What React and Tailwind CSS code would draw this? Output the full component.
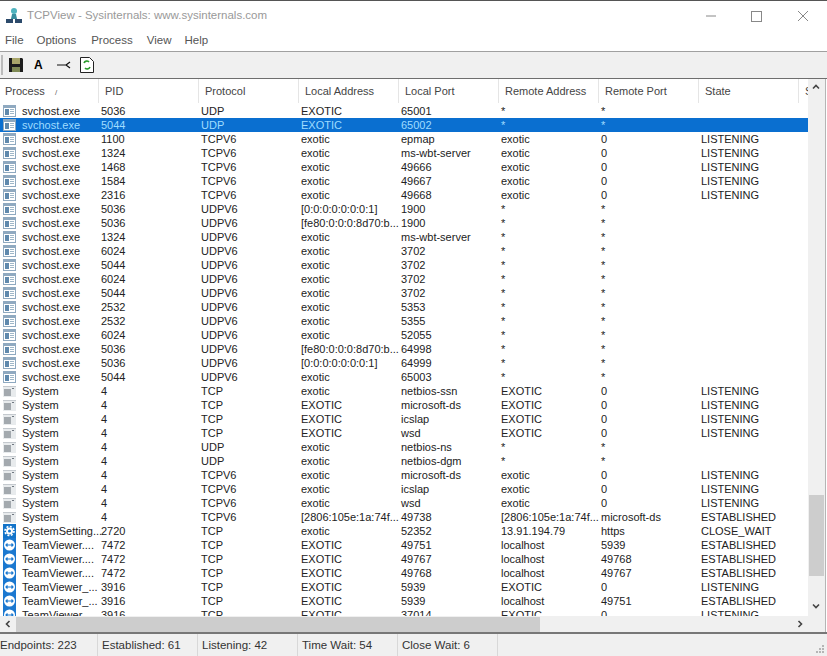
const SV = "svchost.exe", SY = "System";
const rows = [
[0,SV,"5036","UDP","EXOTIC","65001","*","*",""],
[0,SV,"5044","UDP","EXOTIC","65002","*","*",""],
[0,SV,"1100","TCPV6","exotic","epmap","exotic","0","LISTENING"],
[0,SV,"1324","TCPV6","exotic","ms-wbt-server","exotic","0","LISTENING"],
[0,SV,"1468","TCPV6","exotic","49666","exotic","0","LISTENING"],
[0,SV,"1584","TCPV6","exotic","49667","exotic","0","LISTENING"],
[0,SV,"2316","TCPV6","exotic","49668","exotic","0","LISTENING"],
[0,SV,"5036","UDPV6","[0:0:0:0:0:0:0:1]","1900","*","*",""],
[0,SV,"5036","UDPV6","[fe80:0:0:0:8d70:b...","1900","*","*",""],
[0,SV,"1324","UDPV6","exotic","ms-wbt-server","*","*",""],
[0,SV,"6024","UDPV6","exotic","3702","*","*",""],
[0,SV,"5044","UDPV6","exotic","3702","*","*",""],
[0,SV,"6024","UDPV6","exotic","3702","*","*",""],
[0,SV,"5044","UDPV6","exotic","3702","*","*",""],
[0,SV,"2532","UDPV6","exotic","5353","*","*",""],
[0,SV,"2532","UDPV6","exotic","5355","*","*",""],
[0,SV,"6024","UDPV6","exotic","52055","*","*",""],
[0,SV,"5036","UDPV6","[fe80:0:0:0:8d70:b...","64998","*","*",""],
[0,SV,"5036","UDPV6","[0:0:0:0:0:0:0:1]","64999","*","*",""],
[0,SV,"5044","UDPV6","exotic","65003","*","*",""],
[1,SY,"4","TCP","exotic","netbios-ssn","EXOTIC","0","LISTENING"],
[1,SY,"4","TCP","EXOTIC","microsoft-ds","EXOTIC","0","LISTENING"],
[1,SY,"4","TCP","EXOTIC","icslap","EXOTIC","0","LISTENING"],
[1,SY,"4","TCP","EXOTIC","wsd","EXOTIC","0","LISTENING"],
[1,SY,"4","UDP","exotic","netbios-ns","*","*",""],
[1,SY,"4","UDP","exotic","netbios-dgm","*","*",""],
[1,SY,"4","TCPV6","exotic","microsoft-ds","exotic","0","LISTENING"],
[1,SY,"4","TCPV6","exotic","icslap","exotic","0","LISTENING"],
[1,SY,"4","TCPV6","exotic","wsd","exotic","0","LISTENING"],
[1,SY,"4","TCPV6","[2806:105e:1a:74f...","49738","[2806:105e:1a:74f...","microsoft-ds","ESTABLISHED"],
[2,"SystemSetting...","2720","TCP","exotic","52352","13.91.194.79","https","CLOSE_WAIT"],
[3,"TeamViewer....","7472","TCP","EXOTIC","49751","localhost","5939","ESTABLISHED"],
[3,"TeamViewer....","7472","TCP","EXOTIC","49767","localhost","49768","ESTABLISHED"],
[3,"TeamViewer....","7472","TCP","EXOTIC","49768","localhost","49767","ESTABLISHED"],
[3,"TeamViewer_...","3916","TCP","EXOTIC","5939","EXOTIC","0","LISTENING"],
[3,"TeamViewer_...","3916","TCP","EXOTIC","5939","localhost","49751","ESTABLISHED"],
[3,"TeamViewer_...","3916","TCP","EXOTIC","37014","EXOTIC","0","LISTENING"],
];
const heads = ["PID","Protocol","Local Address","Local Port","Remote Address","Remote Port","State"];

function RowIcon({ kind }) {
  if (kind === 0) return (
    <svg width="16" height="14" viewBox="0 0 16 14" className="shrink-0">
      <rect x="3" y="1" width="14" height="12" fill="#8fa9c0" />
      <rect x="4" y="4" width="11" height="8" fill="#fff" />
      <rect x="5" y="5" width="4" height="6" fill="#5f89ad" />
      <rect x="10" y="5" width="4" height="1" fill="#9fb7c8" />
      <rect x="10" y="7" width="4" height="1" fill="#9fb7c8" />
      <rect x="10" y="9" width="4" height="1" fill="#9fb7c8" />
    </svg>
  );
  if (kind === 1) return (
    <svg width="16" height="14" viewBox="0 0 16 14" className="shrink-0">
      <rect x="3" y="2" width="13" height="11" fill="#e8ebed" />
      <rect x="4" y="5" width="7" height="7" fill="#a3a9ae" />
      <rect x="12" y="4" width="2" height="1" fill="#6f7780" />
      <rect x="3" y="2" width="13" height="1" fill="#c4c9ce" />
    </svg>
  );
  if (kind === 2) return (
    <svg width="16" height="14" viewBox="0 0 16 14" className="shrink-0">
      <rect x="3" y="0" width="13" height="14" fill="#1273c9" />
      <circle cx="9.500" cy="7" r="2.500" fill="none" stroke="#fff" strokeWidth="2" />
      <circle cx="9.500" cy="7" r="4.500" fill="none" stroke="#fff" strokeWidth="1.600" strokeDasharray="2 1.500" />
    </svg>
  );
  return (
    <svg width="16" height="14" viewBox="0 0 16 14" className="shrink-0">
      <rect x="3" y="0" width="13" height="14" fill="#1b78d0" />
      <circle cx="9.500" cy="7" r="5.500" fill="#fff" />
      <path d="M6 7h7M7.500 5.500 6 7l1.500 1.500M11.500 5.500 13 7l-1.500 1.500" fill="none" stroke="#1b78d0" strokeWidth="1.200" />
    </svg>
  );
}

export default function App() {
  return (
    <div className="w-[827px] h-[656px] flex flex-col overflow-hidden bg-white text-[11px] text-[#222] font-['Liberation_Sans',sans-serif]">
      <div className="h-[30px] shrink-0 flex items-center border-t border-[#555] bg-white">
        <svg width="18" height="18" viewBox="0 0 18 18" className="ml-[5px] shrink-0">
          <circle cx="9" cy="4" r="3" fill="#4fb3bf" />
          <path d="M7 7h4l1 5H6z" fill="#3a8fa0" />
          <rect x="1" y="12" width="7" height="4" fill="#2c4a6b" />
          <rect x="10" y="12" width="7" height="4" fill="#2c4a6b" />
        </svg>
        <span className="ml-[4px] pt-[1px] text-[11.500px] text-[#999]">TCPView - Sysinternals: www.sysinternals.com</span>
        <div className="ml-auto flex items-center">
          <svg width="12" height="12" viewBox="0 0 12 12" className="mr-[34px]"><path d="M1 6h10" stroke="#888" /></svg>
          <svg width="12" height="12" viewBox="0 0 12 12" className="mr-[34px]"><rect x=".5" y="1.500" width="10" height="10" fill="none" stroke="#888" /></svg>
          <svg width="12" height="12" viewBox="0 0 12 12" className="mr-[18px]"><path d="M1 1l10 10M11 1 1 11" stroke="#888" /></svg>
        </div>
      </div>
      <div className="h-[22px] shrink-0 flex items-center pl-[5px] text-[#555] text-[11.500px] border-b border-[#a0a0a0]">
        <span className="mr-[13px]">File</span><span className="mr-[15px]">Options</span><span className="mr-[14px]">Process</span><span className="mr-[13px]">View</span><span>Help</span>
      </div>
      <div className="h-[27px] shrink-0 flex items-center bg-[#f0f0f0] border-b border-[#6e6e6e]">
        <div className="w-[2px] h-[20px] ml-[1px] bg-[#bbb]" />
        <svg width="16" height="16" viewBox="0 0 16 16" className="ml-[5px]">
          <path d="M1 1h13l1 1v13H1z" fill="#1d1d1d" />
          <rect x="4" y="1" width="8" height="6" fill="#a9a66a" />
          <rect x="4" y="10" width="8" height="5" fill="#7f8a55" />
        </svg>
        <span className="ml-[10px] w-[11px] text-[12px] font-bold text-black leading-none">A</span>
        <svg width="14" height="12" viewBox="0 0 14 12" className="ml-[12px]"><path d="M0 6h9M9 6l4-3M9 6l4 3" fill="none" stroke="#111" strokeWidth="1.200" /></svg>
        <svg width="14" height="16" viewBox="0 0 14 16" className="ml-[9px]">
          <path d="M.5.5h9l4 4v11H.5z" fill="#fff" stroke="#222" />
          <path d="M4 6a3 3 0 0 1 5-1M10 10a3 3 0 0 1-5 1" fill="none" stroke="#2a9a2a" strokeWidth="1.600" />
        </svg>
      </div>
      <div className="flex-1 min-h-0 flex bg-white">
        <div className="w-[808px] shrink-0 flex flex-col min-h-0">
          <div className="flex-1 min-h-0 flex flex-col overflow-hidden">
            <div className="h-[25px] shrink-0 flex items-center text-[#444] pb-[1px]">
              <div className="w-[99px] shrink-0 h-[24px] flex items-center pl-[5px] border-r border-[#e5e5e5] relative">
                Process
                <span className="absolute left-[55px] top-[8px] text-[8px] text-[#666]">/</span>
              </div>
              {heads.map((h) => (
                <div key={h} className="w-[100px] shrink-0 h-[24px] flex items-center pl-[6px] border-r border-[#e5e5e5]">{h}</div>
              ))}
              <div className="pl-[6px]">S</div>
            </div>
            {rows.map((r, i) => (
              <div key={i} className={`h-[14px] shrink-0 flex items-center leading-[14px] whitespace-nowrap ${i === 1 ? "bg-[#0a6fd0] text-[#9fdcff]" : ""}`}>
                <div className="w-[98px] shrink-0 flex items-center">
                  <RowIcon kind={r[0]} />
                  <span className="ml-[6px]">{r[1]}</span>
                </div>
                <div className="w-[100px] shrink-0 pl-[3px]">{r[2]}</div>
                <div className="w-[100px] shrink-0 pl-[3px]">{r[3]}</div>
                <div className="w-[100px] shrink-0 pl-[3px]">{r[4]}</div>
                <div className="w-[100px] shrink-0 pl-[3px]">{r[5]}</div>
                <div className="w-[100px] shrink-0 pl-[3px]">{r[6]}</div>
                <div className="w-[100px] shrink-0 pl-[3px]">{r[7]}</div>
                <div className="w-[100px] shrink-0 pl-[3px]">{r[8]}</div>
              </div>
            ))}
          </div>
          <div className="h-[16px] shrink-0 flex items-center bg-[#f0f0f0]">
            <svg width="16" height="16" viewBox="0 0 16 16"><path d="M9.500 5 6.500 8l3 3" fill="none" stroke="#444" strokeWidth="1.600" /></svg>
            <div className="w-[524px] h-[15px] bg-[#cdcdcd]" />
            <svg width="16" height="16" viewBox="0 0 16 16" className="ml-auto"><path d="M6.500 5l3 3-3 3" fill="none" stroke="#444" strokeWidth="1.600" /></svg>
          </div>
        </div>
        <div className="w-[17px] shrink-0 flex flex-col bg-[#f0f0f0]">
          <svg width="16" height="16" viewBox="0 0 16 16" className="shrink-0"><path d="M5 9.500l3-3 3 3" fill="none" stroke="#444" strokeWidth="1.600" /></svg>
          <div className="flex-1 flex flex-col justify-end pb-[22px]">
            <div className="h-[81px] w-[15px] ml-[1px] bg-[#cdcdcd]" />
          </div>
          <svg width="16" height="16" viewBox="0 0 16 16" className="shrink-0"><path d="M5 6.500l3 3 3-3" fill="none" stroke="#444" strokeWidth="1.600" /></svg>
          <div className="h-[18px] shrink-0" />
        </div>
        <div className="w-[2px] shrink-0 bg-white border-l border-[#b5b5b5]" />
      </div>
      <div className="h-[24px] shrink-0 flex items-center border-t-2 border-[#777] bg-[#f0f0f0] text-[11.500px] text-[#333] relative">
        <div className="w-[98px] shrink-0 h-full flex items-center pt-[1px] border-r border-[#d8d8d8]">Endpoints: 223</div>
        {["Established: 61","Listening: 42","Time Wait: 54","Close Wait: 6"].map((s) => (
          <div key={s} className="w-[100px] shrink-0 h-full flex items-center pl-[4px] pt-[1px] border-r border-[#d8d8d8]">{s}</div>
        ))}
        <svg width="12" height="12" viewBox="0 0 12 12" className="absolute right-[1px] bottom-[1px]">
          <g fill="#b5b5b5">
            <rect x="8" y="2" width="2" height="2" />
            <rect x="5" y="5" width="2" height="2" /><rect x="8" y="5" width="2" height="2" />
            <rect x="2" y="8" width="2" height="2" /><rect x="5" y="8" width="2" height="2" /><rect x="8" y="8" width="2" height="2" />
          </g>
        </svg>
      </div>
    </div>
  );
}
